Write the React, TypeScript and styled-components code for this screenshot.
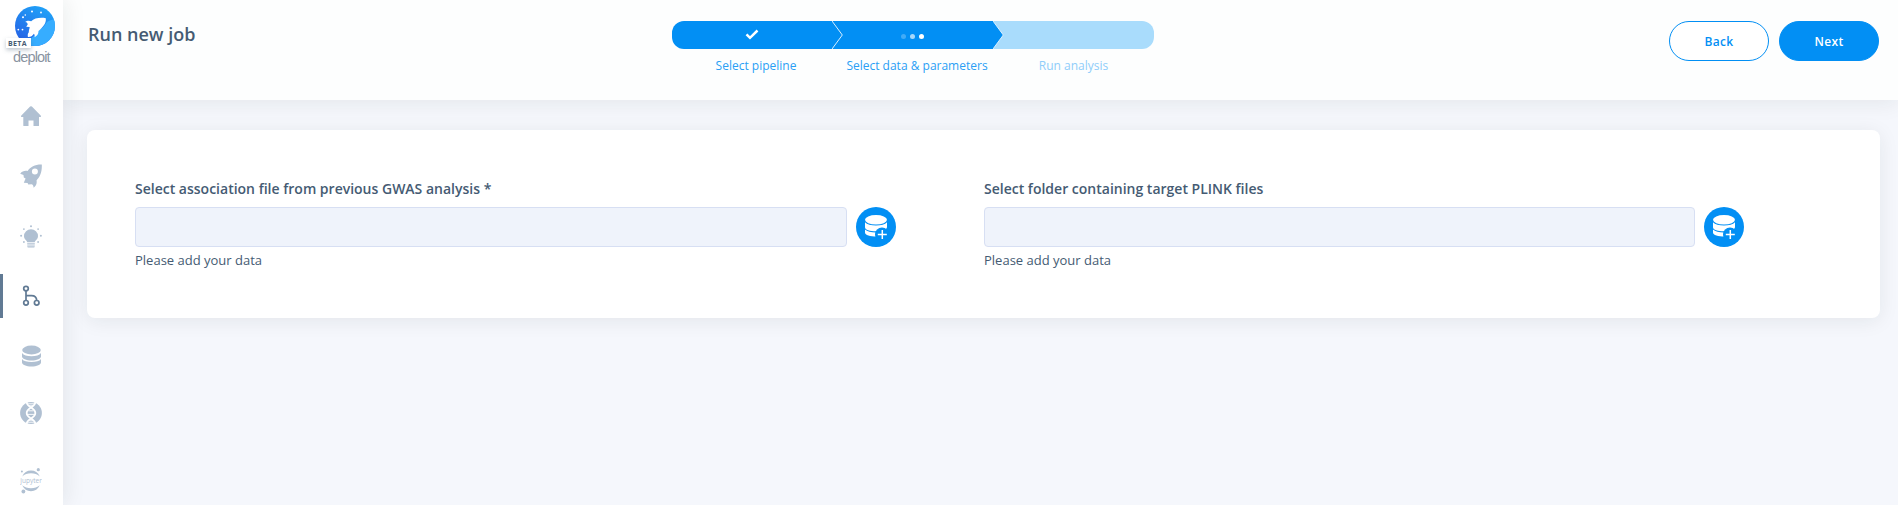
import React from "react";
import styled, { createGlobalStyle, css } from "styled-components";

const BLUE = "#028ff4";
const INK = "#455b73";
const MUTED = "#b0c0d2";

const GlobalStyle = createGlobalStyle`
  *, *::before, *::after { box-sizing: border-box; }
  html, body { margin: 0; background: #f5f7fc; overflow: hidden; }
  body { font-family: "Open Sans", "Noto Sans", sans-serif; color: ${INK}; }
`;

const Shell = styled.div`
  display: flex;
  height: 505px;
  overflow: hidden;
`;

const Sidebar = styled.nav`
  position: relative;
  z-index: 3;
  flex: 0 0 63px;
  background: #fff;
  display: flex;
  flex-direction: column;
  box-shadow: 3px 0 20px rgba(30, 34, 40, 0.08);
`;

const Brand = styled.div`
  position: relative;
  height: 94px;
  padding-top: 6px;
`;

const BrandMark = styled.svg`
  display: block;
  width: 40px;
  height: 40px;
  margin-left: 15px;
`;

const BetaTag = styled.span`
  position: absolute;
  left: 6px;
  top: 38px;
  width: 25px;
  height: 10px;
  background: #fff;
  box-shadow: 0 2px 4px rgba(69, 91, 115, 0.35);
  font: 700 7px/11px "Open Sans", sans-serif;
  letter-spacing: 0.35px;
  padding-left: 2px;
`;

const BrandName = styled.div`
  margin: 2px 0 0 13px;
  font: 14.5px/18px "Liberation Sans", sans-serif;
  letter-spacing: -0.85px;
  color: #89939f;
`;

const NavItem = styled.a<{ $height: number; $active?: boolean }>`
  flex: 0 0 ${(p) => p.$height}px;
  display: flex;
  align-items: center;
  padding-left: 20px;
  color: ${(p) => (p.$active ? "#617a94" : MUTED)};
  ${(p) =>
    p.$active &&
    css`
      border-left: 3px solid #617a94;
      padding-left: 17px;
    `}
  svg { display: block; }
`;

const NavGap = styled.div<{ $size: number }>`
  flex: 0 0 ${(p) => p.$size}px;
`;

const Main = styled.main`
  flex: 1;
  min-width: 0;
`;

const Header = styled.header`
  position: relative;
  z-index: 2;
  height: 100px;
  background: #fdfefe;
  box-shadow: 0 3px 20px rgba(30, 34, 40, 0.08);
  display: grid;
  grid-template-columns: 609px 482px 1fr;
  padding: 21px 19px 0 0;
`;

const Title = styled.h1`
  margin: 0;
  padding: 0 0 0 25px;
  font-size: 18px;
  line-height: 26px;
  font-weight: 600;
`;

const Steps = styled.div`
  display: flex;
`;

const Step = styled.div<{ $width: number; $pending?: boolean }>`
  flex: 0 0 ${(p) => p.$width}px;
  color: ${(p) => (p.$pending ? "#8fcdfa" : "#2a9ff5")};
`;

const StepBar = styled.div<{ $edge?: "start" | "end"; $pending?: boolean }>`
  position: relative;
  height: 28px;
  display: flex;
  align-items: center;
  justify-content: center;
  gap: 4px;
  background: ${(p) => (p.$pending ? "#a9dcfc" : BLUE)};
  border-radius: ${(p) =>
    p.$edge === "start" ? "12px 0 0 12px" : p.$edge === "end" ? "0 12px 12px 0" : "0"};
`;

const Arrow = styled.svg`
  position: absolute;
  z-index: 1;
  left: 100%;
  top: 0;
  width: 12px;
  height: 28px;
`;

const Dot = styled.span<{ $alpha: number }>`
  width: 5px;
  height: 5px;
  margin-top: 3px;
  border-radius: 50%;
  background: rgba(255, 255, 255, ${(p) => p.$alpha});
`;

const StepLabel = styled.div<{ $shift?: number }>`
  padding-left: ${(p) => p.$shift ?? 0}px;
  margin-top: 8px;
  font-size: 12px;
  line-height: 18px;
  text-align: center;
  white-space: nowrap;
`;

const Actions = styled.div`
  display: flex;
  justify-content: flex-end;
  gap: 10px;
`;

const PillButton = styled.button<{ $filled?: boolean }>`
  width: 100px;
  height: 40px;
  padding: 0;
  border: 1px solid ${BLUE};
  border-radius: 20px;
  background: ${(p) => (p.$filled ? BLUE : "#fff")};
  color: ${(p) => (p.$filled ? "#fff" : BLUE)};
  font: 600 12px "Open Sans", sans-serif;
  letter-spacing: 0.3px;
`;

const Card = styled.section`
  height: 188px;
  margin: 30px 18px 0 24px;
  padding: 48px 48px 0;
  border-radius: 8px;
  background: #fff;
  box-shadow: 0 3px 20px rgba(30, 34, 40, 0.08);
  display: grid;
  grid-template-columns: 761px 760px;
  column-gap: 88px;
`;

const FieldLabel = styled.label`
  display: block;
  height: 29px;
  font-size: 14px;
  line-height: 22px;
  font-weight: 600;
`;

const FieldRow = styled.div`
  display: flex;
  gap: 9px;
`;

const FieldInput = styled.input`
  flex: 1;
  min-width: 0;
  height: 40px;
  border: 1px solid #d7dff3;
  border-radius: 4px;
  background: #eff3fb;
`;

const AddButton = styled.button`
  flex: 0 0 40px;
  height: 40px;
  padding: 0;
  border: 0;
  border-radius: 50%;
  background: ${BLUE};
  svg { display: block; }
`;

const Hint = styled.div`
  margin-top: 3px;
  font-size: 13px;
  line-height: 20px;
`;

const Logo = () => (
  <BrandMark viewBox="0 0 40 40">
    <defs>
      <linearGradient id="sky" x1="0.7" y1="0" x2="0.2" y2="0.9">
        <stop offset="0" stopColor="#1fa2f8" />
        <stop offset="1" stopColor="#2563e6" />
      </linearGradient>
      <clipPath id="disc"><circle cx="20" cy="20" r="20" /></clipPath>
    </defs>
    <g clipPath="url(#disc)">
      <rect width="40" height="40" fill="url(#sky)" />
      <path d="M40 13.500c-4 .2-8 1.500-9.500 4.500-1.500 3-4 4.500-7 6.500-3 2-3 5-6 6.500-2.500 1.500-4 5-3 9H40z" fill="#36adff" />
      <path d="M30.800 12.200c-6-1-11.800.2-14.600 3-2-.9-4.500-.7-6 .8 1.800.3 2.300 1.200 2.500 2.500l-1.500 2.300 3.400.3c.3 1.200-1 3.200-.8 5.200-1 1-1.300 2.700-.9 4.700 2.500.2 4.700-1 6-3.200.8.900 1 2 .7 3.400 2.500-1.200 4-3.500 3.900-6.200C27.500 21.500 31.500 17.500 30.800 12.200z" fill="#fff" />
      <g fill="#fff">
        <circle cx="17" cy="5.500" r="1" /><circle cx="26" cy="6.500" r=".9" />
        <circle cx="10.300" cy="9" r=".8" /><circle cx="8" cy="11.200" r="1" />
        <circle cx="3.300" cy="23.600" r=".9" /><circle cx="7.500" cy="23.600" r=".9" />
      </g>
    </g>
  </BrandMark>
);

const HomeIcon = () => (
  <svg width="22" height="22" viewBox="0 0 22 22" fill="currentColor">
    <path d="M11 1.200q.5 0 .9.400l9 9.200q.6.800-.4 1.100H19v8.500q0 .6-.6.600h-4.900v-5.500h-5V21H3.900q-.6 0-.6-.6v-8.500H1.500q-1-.3-.4-1.100l9-9.200q.4-.4.900-.4z" />
  </svg>
);

const RocketIcon = () => (
  <svg width="22" height="24" viewBox="0 0 22 24" fill="currentColor">
    <path fillRule="evenodd" d="M21.800.6C15 .4 10.500 3 7.600 7 4.600 6.500 2 7.300.2 9.800l3.300 1.300.3 2.300 1.800 1-1.800 4.300 3.800.3.700 1.600 3.400-.4c1.400.4 1.800 1.600 1.900 3.600 2.500-1.800 3.600-4.500 2.900-7.400C20 12.800 22.200 8 21.800.6zM14.900 4.400a3 3 0 1 1 0 6 3 3 0 0 1 0-6z" />
  </svg>
);

const BulbIcon = () => (
  <svg width="22" height="23" viewBox="0 0 22 23" fill="currentColor">
    <path d="M11 4.200a7 7 0 0 1 7 7c0 3-3 4.300-3.200 5.800H7.200C7 15.500 4 14.200 4 11.200a7 7 0 0 1 7-7z" />
    <path d="M7.200 17.800h7.600v1H7.200zM7.200 19.600h7.600v.9H7.200zM7.200 21.300h7.600q0 1.200-1 1.200H8.200q-1 0-1-1.200z" />
    <circle cx="11" cy="1.300" r="1" /><circle cx="3.900" cy="4.100" r=".9" />
    <circle cx="18.100" cy="4.100" r=".9" /><circle cx="1.100" cy="10.700" r="1" />
    <circle cx="20.900" cy="10.700" r="1" /><circle cx="3.900" cy="17" r=".9" />
    <circle cx="18.100" cy="17" r=".9" />
  </svg>
);

const PipelineIcon = () => (
  <svg width="22" height="22" viewBox="0 0 22 22" fill="none" stroke="currentColor" strokeWidth="1.700">
    <circle cx="6" cy="3.600" r="2.300" /><circle cx="6" cy="17.800" r="2.300" />
    <circle cx="16.700" cy="17.800" r="2.300" />
    <path d="M6 6v9.500M6 10.700h5.500q5 0 5.200 4.800" />
  </svg>
);

const DatabaseIcon = () => (
  <svg width="22" height="22" viewBox="0 0 22 22" fill="currentColor">
    <ellipse cx="11.500" cy="5" rx="9.300" ry="4.400" />
    <path d="M2 8c1.500 2.200 5 3.300 9.500 3.300S19.500 10.200 21 8v3.500c0 2.300-4.200 4-9.500 4S2 13.800 2 11.500z" />
    <path d="M2 14c1.500 2.200 5 3 9.500 3s8-.8 9.500-3v3.500c0 2.300-4.200 4-9.500 4S2 19.800 2 17.500z" />
  </svg>
);

const DnaIcon = () => (
  <svg width="22" height="22" viewBox="0 0 22 22">
    <circle cx="11" cy="11" r="10.900" fill="currentColor" />
    <g fill="none" stroke="#fff">
      <path d="M6.700 0c0 6 8.600 5 8.600 11s-8.600 5-8.600 11M15.300 0c0 6-8.600 5-8.600 11s8.600 5 8.600 11" strokeWidth="1.800" />
      <path d="M7.500 1.800h7M9 3.800h4M8.300 8.800h5.400M7.500 12.400h7M9 18.200h4M7.500 20.200h7" strokeWidth=".9" />
    </g>
  </svg>
);

const JupyterIcon = () => (
  <svg width="22" height="26" viewBox="0 0 22 26" fill="currentColor">
    <path d="M2.200 8.400C4 4.300 7 2.400 11 2.400s7 1.900 8.800 6C17.500 6.200 14.500 5.200 11 5.200S4.500 6.200 2.200 8.400zM2.200 17.300c1.800 4 4.800 5.900 8.800 5.900s7-1.900 8.800-5.900c-2.300 2.100-5.300 3-8.800 3s-6.500-.9-8.800-3z" />
    <circle cx="18.300" cy="1.700" r="1.600" /><circle cx="1.900" cy="3.600" r="1" />
    <circle cx="3.400" cy="23.500" r="1.900" />
    <text x=".3" y="14.500" fontSize="6.300" fontFamily="Open Sans, sans-serif" textLength="21.500" lengthAdjust="spacingAndGlyphs">jupyter</text>
  </svg>
);

const AddDataIcon = () => (
  <svg width="40" height="40" viewBox="0 0 40 40">
    <g fill="#fff">
      <ellipse cx="20" cy="12.800" rx="11" ry="4.800" />
      <path d="M9 15.300c2 2.200 6 3.300 11 3.300s9-1.100 11-3.300V20c0 2.600-5 4.300-11 4.300S9 22.800 9 20.200z" />
      <path d="M9 22.500c2 1.900 6 2.900 11 2.900h2v4.100c-7 .2-13-1.200-13-4z" />
    </g>
    <circle cx="26" cy="27.500" r="7" fill={BLUE} />
    <path d="M26.300 23v9M21.800 27.500h9" stroke="#fff" strokeWidth="1.500" />
  </svg>
);

const StepArrow = () => (
  <Arrow viewBox="0 0 12 28">
    <path d="M-1 0h1l10.300 14L0 28h-1z" fill={BLUE} />
    <path d="M0 0l10.300 14L0 28" fill="none" stroke="#d9effe" strokeWidth="1" />
  </Arrow>
);

const DataField = ({ label }: { label: string }) => (
  <div>
    <FieldLabel>{label}</FieldLabel>
    <FieldRow>
      <FieldInput aria-label={label} />
      <AddButton aria-label="Add data"><AddDataIcon /></AddButton>
    </FieldRow>
    <Hint>Please add your data</Hint>
  </div>
);

export default function App() {
  return (
    <>
      <GlobalStyle />
      <Shell>
        <Sidebar>
          <Brand>
            <Logo />
            <BetaTag>BETA</BetaTag>
            <BrandName>deploit</BrandName>
          </Brand>
          <NavItem $height={44}><HomeIcon /></NavItem>
          <NavGap $size={16} />
          <NavItem $height={44}><RocketIcon /></NavItem>
          <NavGap $size={16} />
          <NavItem $height={44}><BulbIcon /></NavItem>
          <NavGap $size={16} />
          <NavItem $height={44} $active><PipelineIcon /></NavItem>
          <NavGap $size={16} />
          <NavItem $height={44}><DatabaseIcon /></NavItem>
          <NavGap $size={13} />
          <NavItem $height={44}><DnaIcon /></NavItem>
          <NavGap $size={24} />
          <NavItem $height={44}><JupyterIcon /></NavItem>
        </Sidebar>
        <Main>
          <Header>
            <Title>Run new job</Title>
            <Steps>
              <Step $width={160}>
                <StepBar $edge="start">
                  <svg width="14" height="12" viewBox="0 0 14 12">
                    <path d="M1.500 5.300l3.500 3.500L12.500 1.500" fill="none" stroke="#fff" strokeWidth="2.500" />
                  </svg>
                  <StepArrow />
                </StepBar>
                <StepLabel $shift={8}>Select pipeline</StepLabel>
              </Step>
              <Step $width={161}>
                <StepBar>
                  <Dot $alpha={0.25} />
                  <Dot $alpha={0.65} />
                  <Dot $alpha={1} />
                  <StepArrow />
                </StepBar>
                <StepLabel $shift={9}>Select data &amp; parameters</StepLabel>
              </Step>
              <Step $width={161} $pending>
                <StepBar $edge="end" $pending />
                <StepLabel>Run analysis</StepLabel>
              </Step>
            </Steps>
            <Actions>
              <PillButton>Back</PillButton>
              <PillButton $filled>Next</PillButton>
            </Actions>
          </Header>
          <Card>
            <DataField label="Select association file from previous GWAS analysis *" />
            <DataField label="Select folder containing target PLINK files" />
          </Card>
        </Main>
      </Shell>
    </>
  );
}
